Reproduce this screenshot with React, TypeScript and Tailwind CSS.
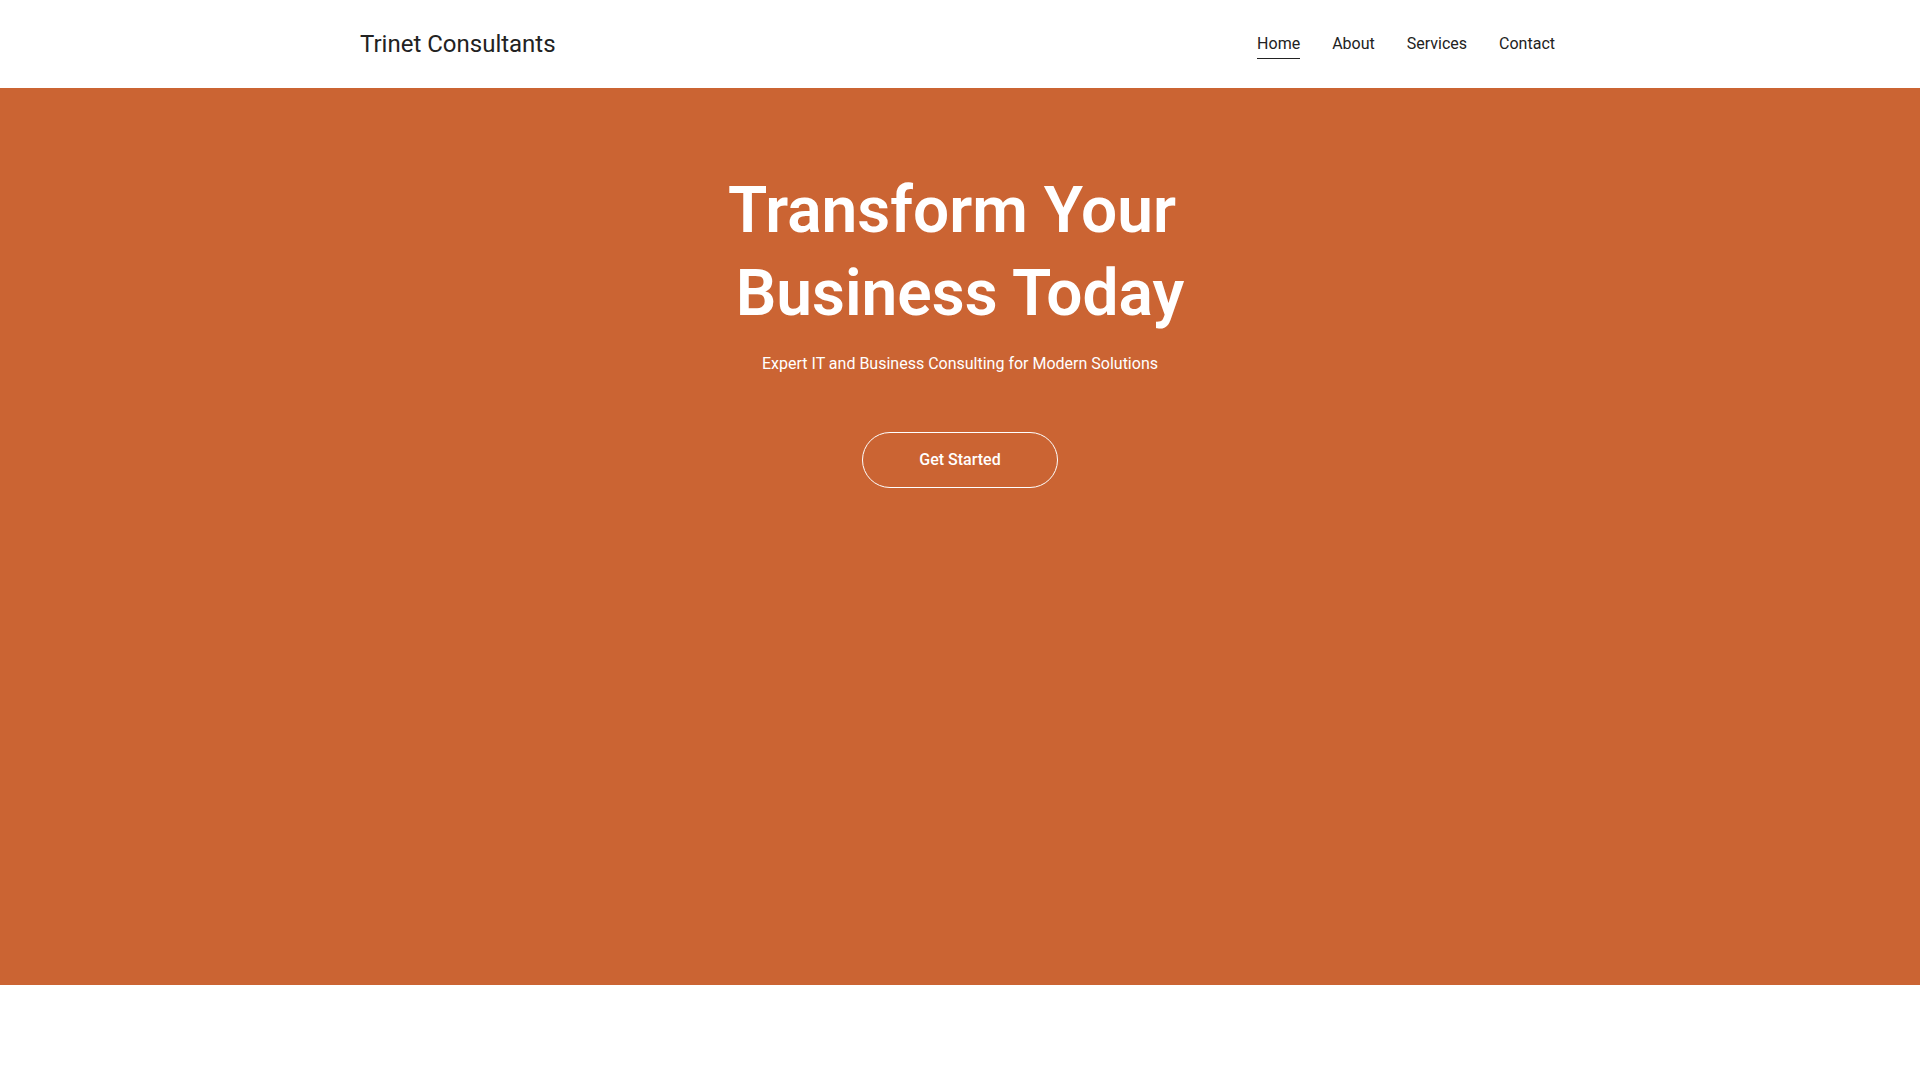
import React from 'react';

const navLinks = ['Home', 'About', 'Services', 'Contact'];

const App: React.FC = () => {
  return (
    <div className="h-screen overflow-y-scroll bg-white font-['Roboto','Liberation_Sans',sans-serif] text-[#222222]">
      <header className="h-[88px] bg-white">
        <div className="max-w-[1200px] mx-auto h-full flex items-center justify-between">
          <a href="#" className="text-[24px] leading-none text-[#222222]">
            Trinet Consultants
          </a>
          <nav className="pr-[5px]">
            <ul className="flex items-center gap-8 text-[16px] leading-[20px]">
              {navLinks.map((link, i) => (
                <li key={link}>
                  <a
                    href="#"
                    className={
                      i === 0
                        ? 'block pt-[4px] pb-[4px] border-b-[1.5px] border-[#222222]'
                        : 'block pt-[4px] pb-[4px] border-b-[1.5px] border-transparent'
                    }
                  >
                    {link}
                  </a>
                </li>
              ))}
            </ul>
          </nav>
        </div>
      </header>

      <section className="h-[897px] bg-[#cb6433] text-white">
        <div className="flex flex-col items-center pt-[81px] text-center">
          <h1 className="max-w-[600px] text-[64px] leading-[83px] font-semibold">
            {'Transform Your\u00a0'}
            <br />
            Business Today
          </h1>
          <p className="mt-[16px] text-[16px] leading-[26px]">
            Expert IT and Business Consulting for Modern Solutions
          </p>
          <button className="mt-[55px] h-[56px] px-[56px] rounded-full border border-white text-[16px] font-medium">
            Get Started
          </button>
        </div>
      </section>

      <section className="bg-white py-32">
        <div className="max-w-[1200px] mx-auto pt-16">
          <h2 className="text-4xl font-bold text-center mb-6">About Us</h2>
          <p className="text-lg text-center text-gray-600 max-w-3xl mx-auto">
            Trinet Consultants helps organisations modernise their technology and operations with practical,
            results-driven IT and business consulting.
          </p>
        </div>
      </section>

      <section className="bg-gray-50 py-32">
        <div className="max-w-[1200px] mx-auto">
          <h2 className="text-4xl font-bold text-center mb-12">Our Services</h2>
          <div className="grid grid-cols-3 gap-8">
            {['IT Strategy', 'Cloud Solutions', 'Business Process'].map((s) => (
              <div key={s} className="bg-white p-8 rounded-lg shadow h-[280px]">
                <h3 className="text-2xl font-medium mb-4">{s}</h3>
                <p className="text-gray-600">Tailored consulting to help your business grow.</p>
              </div>
            ))}
          </div>
        </div>
      </section>

      <section className="bg-white py-32">
        <div className="max-w-[1200px] mx-auto h-[900px]">
          <h2 className="text-4xl font-bold text-center mb-12">Contact</h2>
        </div>
      </section>
    </div>
  );
};

export default App;
